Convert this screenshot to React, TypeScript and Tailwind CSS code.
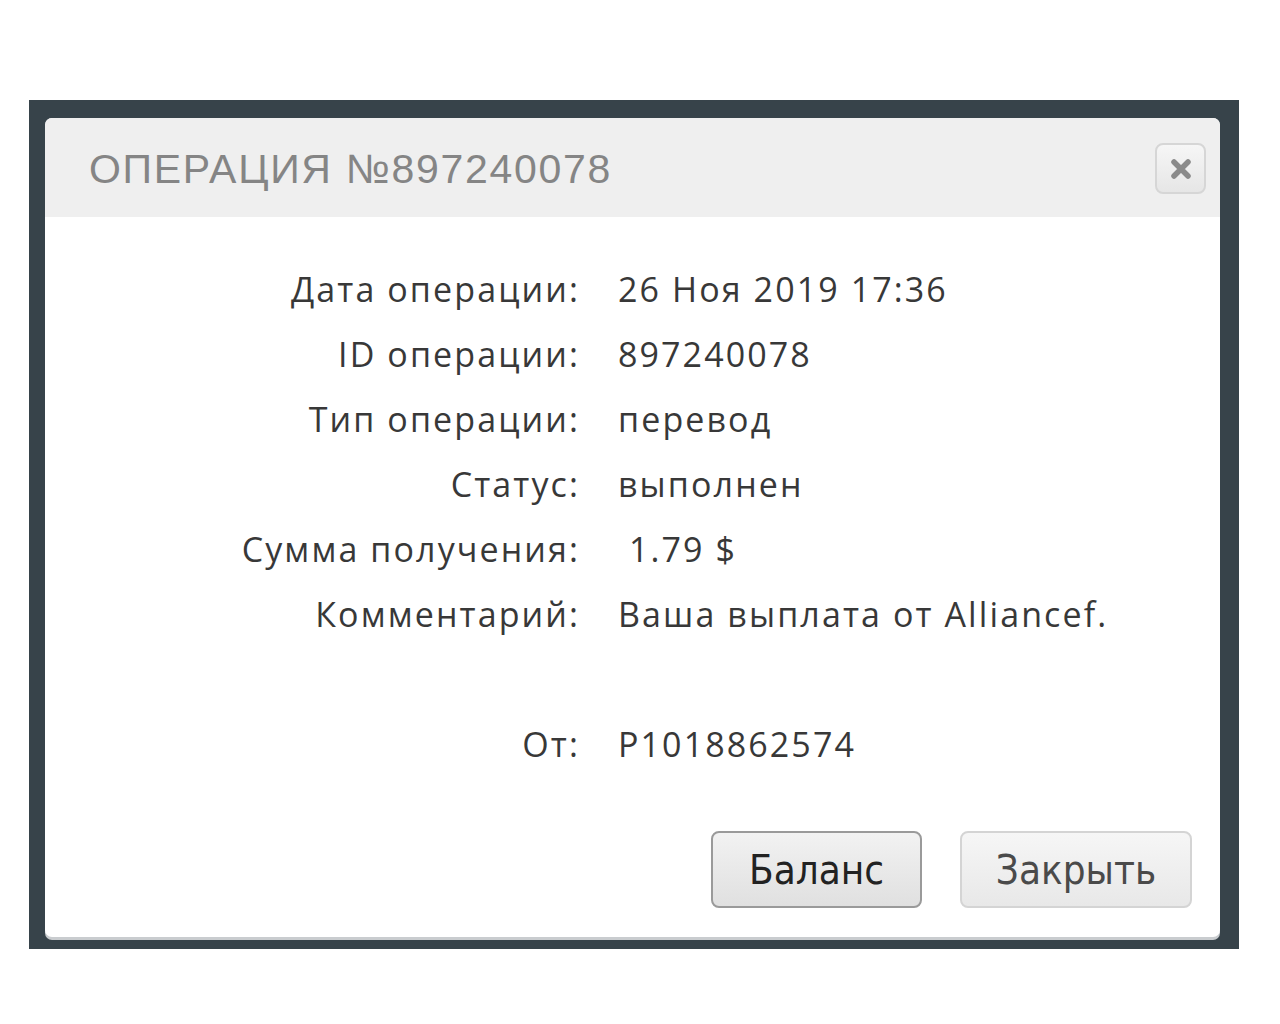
const rows: [string, string][] = [
  ['Дата операции:', '26 Ноя 2019 17:36'],
  ['ID операции:', '897240078'],
  ['Тип операции:', 'перевод'],
  ['Статус:', 'выполнен'],
  ['Сумма получения:', '\u00a01.79 $'],
  ['Комментарий:', 'Ваша выплата от Alliancef.'],
  ['', ''],
  ['От:', 'P1018862574'],
];

const CloseIcon = () => (
  <svg width="24" height="24" viewBox="0 0 24 24">
    <path d="M5 5 L19 19 M19 5 L5 19" stroke="#8a8a8a" strokeWidth="5.5" strokeLinecap="round" />
  </svg>
);

export default function App() {
  return (
    <div className="min-h-screen bg-white pt-[100px] pl-[29px]">
      <div className="w-[1210px] h-[849px] bg-[#37434a] pl-[16px] pt-[18px] pr-[19px]">
        <div className="w-[1175px] h-[819px] bg-white rounded-[7px] shadow-[0_3px_0_#c9cccf] overflow-hidden flex flex-col">
          <div className="h-[99px] bg-[#efefef] flex items-center justify-between pl-[44px] pr-[14px]">
            <h1
              className="text-[41px] tracking-[1.7px] text-[#858585] pt-[4px]"
              style={{ fontFamily: '"Liberation Sans", Arial, sans-serif' }}
            >
              ОПЕРАЦИЯ №897240078
            </h1>
            <button className="w-[51px] h-[51px] mt-[2px] rounded-[8px] border-2 border-[#d6d6d6] bg-gradient-to-b from-[#f6f6f6] to-[#e6e6e6] flex items-center justify-center">
              <CloseIcon />
            </button>
          </div>

          <div
            className="grid grid-cols-[535px_1fr] gap-x-[38px] pt-[40px] text-[#383838] text-[34px] font-medium tracking-[2.1px]"
            style={{ fontFamily: '"Open Sans", sans-serif' }}
          >
            {rows.map(([label, value], i) => (
              <div key={i} className="contents">
                <div className="h-[65px] leading-[65px] text-right">{label}</div>
                <div className="h-[65px] leading-[65px] whitespace-pre">{value}</div>
              </div>
            ))}
          </div>

          <div
            className="flex justify-end gap-[38px] pr-[28px] pt-[54px] text-[40px]"
            style={{ fontFamily: '"DejaVu Sans Condensed", "DejaVu Sans", sans-serif' }}
          >
            <button className="w-[211px] h-[77px] rounded-[8px] border-2 border-[#9a9a9a] bg-gradient-to-b from-[#f2f2f2] to-[#e0e0e0] text-[#222]">
              Баланс
            </button>
            <button className="w-[232px] h-[77px] rounded-[8px] border-2 border-[#d4d4d4] bg-gradient-to-b from-[#f6f6f6] to-[#e8e8e8] text-[#4a4a4a]">
              Закрыть
            </button>
          </div>
        </div>
      </div>
    </div>
  );
}
